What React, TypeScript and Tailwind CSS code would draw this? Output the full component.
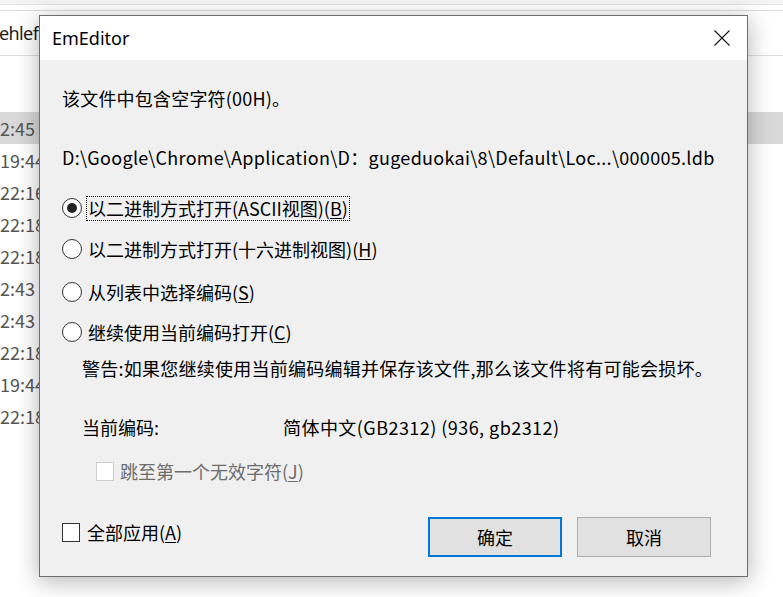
import React from "react";

const font = { fontFamily: '"Noto Sans CJK SC", "Noto Sans", sans-serif' };

const times = ["2:45", "19:44", "22:16", "22:18", "22:18", "2:43", "2:43", "22:18", "19:44", "22:18"];

const Radio = ({ checked, children }: { checked?: boolean; children: React.ReactNode }) => (
  <div className="flex h-[26px] items-center">
    <span className="flex h-[20px] w-[20px] items-center justify-center rounded-full border border-[#333] bg-white">
      {checked && <span className="h-[10px] w-[10px] rounded-full bg-[#222]" />}
    </span>
    {children}
  </div>
);

const U = ({ children }: { children: React.ReactNode }) => <span className="underline underline-offset-2">{children}</span>;

export default function App() {
  return (
    <div className="relative h-[597px] w-[783px] overflow-hidden bg-white text-black" style={font}>
      {/* window behind */}
      <div className="h-[5px] border-b border-[#e3e3e3] bg-[#f3f3f3]" />
      <div className="h-[6px] border-b border-[#dcdcdc]" />
      <div
        className="flex h-[45px] items-center border-b border-[#dedede] text-[18px] tracking-[-0.6px] text-[#1a1a1a]"
        style={{ fontFamily: '"Noto Sans", sans-serif' }}
      >
        <span className="-ml-[1px]">ehlefi</span>
      </div>
      <div className="mt-[56px] flex flex-col">
        {times.map((t, i) => (
          <div
            key={i}
            className={
              "flex h-[32px] items-center text-[18px] text-[#555] " + (i === 0 ? "bg-[#d9d9d9]" : "")
            }
          >
            {t}
          </div>
        ))}
      </div>

      {/* dialog */}
      <div className="absolute left-[39px] top-[15px] flex h-[562px] w-[709px] flex-col border border-[#6e6e6e] bg-[#f0f0f0] shadow-[0_4px_22px_rgba(0,0,0,0.3)]">
        <div className="flex h-[44px] items-center justify-between bg-white pl-[12px] pr-[16px]">
          <span className="text-[18px] text-black" style={{ fontFamily: '"Noto Sans", sans-serif' }}>
            EmEditor
          </span>
          <svg width="16" height="16" viewBox="0 0 16 16" className="mr-[1px]">
            <path d="M0.5 0.5 L15.5 15.5 M15.5 0.5 L0.5 15.5" stroke="#111" strokeWidth="1.1" fill="none" />
          </svg>
        </div>

        <div className="flex flex-1 flex-col pl-[22px] pr-[36px] text-[18px] leading-[26px]">
          <div className="mt-[25px] tracking-[0.2px]">该文件中包含空字符(00H)。</div>
          <div className="mt-[33px] whitespace-nowrap tracking-[0.3px]">
            D:\Google\Chrome\Application\D：gugeduokai\8\Default\Loc...\000005.ldb
          </div>

          <div className="mt-[25px]">
            <Radio checked>
              <span className="ml-[4px] border border-dotted border-black px-[1px] leading-[23px]">
                以二进制方式打开(ASCII视图)(<U>B</U>)
              </span>
            </Radio>
          </div>
          <div className="mt-[15px]">
            <Radio>
              <span className="ml-[6px]">
                以二进制方式打开(十六进制视图)(<U>H</U>)
              </span>
            </Radio>
          </div>
          <div className="mt-[17px]">
            <Radio>
              <span className="ml-[6px]">
                从列表中选择编码(<U>S</U>)
              </span>
            </Radio>
          </div>
          <div className="mt-[14px]">
            <Radio>
              <span className="ml-[6px]">
                继续使用当前编码打开(<U>C</U>)
              </span>
            </Radio>
          </div>

          <div className="ml-[20px] mt-[10px] whitespace-nowrap tracking-[0.25px]">
            警告:如果您继续使用当前编码编辑并保存该文件,那么该文件将有可能会损坏。
          </div>
          <div className="ml-[20px] mt-[33px] flex">
            <span className="w-[201px]">当前编码:</span>
            <span className="tracking-[0.45px]">简体中文(GB2312) (936, gb2312)</span>
          </div>
          <div className="ml-[34px] mt-[18px] flex h-[26px] items-center text-[#6d6d6d]">
            <span className="h-[19px] w-[18px] border border-[#cccccc] bg-white" />
            <span className="ml-[6px]">
              跳至第一个无效字符(<U>J</U>)
            </span>
          </div>

          <div className="mt-[33px] flex h-[40px] items-start">
            <div className="mt-[2px] flex h-[26px] items-center">
              <span className="h-[19px] w-[18px] border border-[#333] bg-white" />
              <span className="ml-[7px]">
                全部应用(<U>A</U>)
              </span>
            </div>
            <div className="ml-auto flex gap-[15px]">
              <button className="flex h-[40px] w-[134px] items-center justify-center border-2 border-[#0078d7] bg-[#e1e1e1] text-[18px]">
                确定
              </button>
              <button className="flex h-[40px] w-[134px] items-center justify-center border border-[#adadad] bg-[#e1e1e1] text-[18px]">
                取消
              </button>
            </div>
          </div>
        </div>
      </div>
    </div>
  );
}
